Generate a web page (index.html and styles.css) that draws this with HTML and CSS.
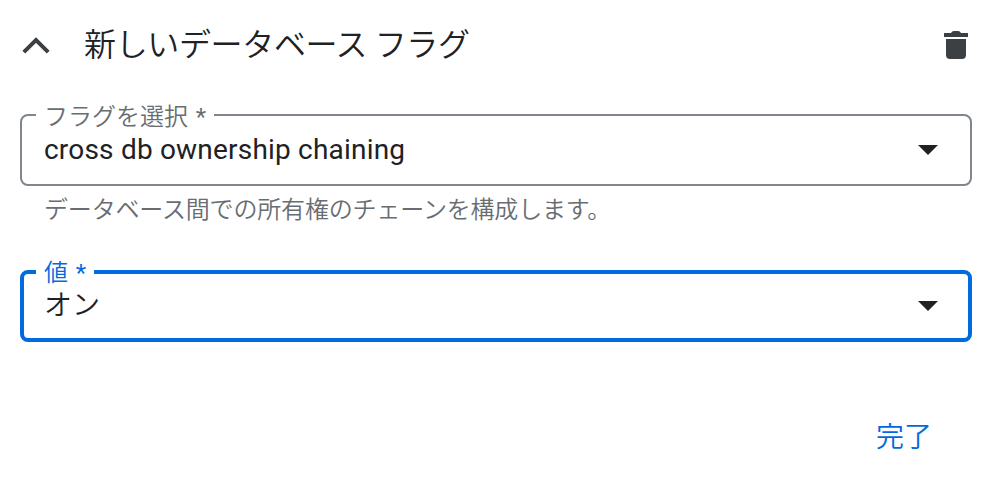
FILE: index.html
```
<!DOCTYPE html>
<html lang="ja">
<head>
    <meta charset="UTF-8">
    <meta name="viewport" content="width=device-width, initial-scale=1.0">
    <title>新しいデータベース フラグ</title>
    <link rel="stylesheet" href="styles.css">
</head>
<body>
<div class="panel">
    <div class="header">
        <svg class="chevron" viewBox="0 0 32 32"><path d="M3.8 23.2 16 11l12.2 12.2" fill="none" stroke="currentColor" stroke-width="4"/></svg>
        <h2 class="title">新しいデータベース フラグ</h2>
        <svg class="trash" viewBox="0 0 24 28"><path d="M0 2h7q1-2 3-2h4q2 0 3 2h7v4H0zM2 8h20v16q0 4-4 4H6q-4 0-4-4z" fill="currentColor"/></svg>
    </div>

    <fieldset class="field">
        <legend class="label">フラグを選択 <span class="required">*</span></legend>
        <div class="select">
            <span class="value">cross db ownership chaining</span>
            <svg class="arrow" viewBox="0 0 20 10"><path d="M0 0h20L10 10z" fill="currentColor"/></svg>
        </div>
    </fieldset>
    <p class="hint">データベース間での所有権のチェーンを構成します。</p>

    <fieldset class="field focused">
        <legend class="label">値 <span class="required">*</span></legend>
        <div class="select">
            <span class="value">オン</span>
            <svg class="arrow" viewBox="0 0 20 10"><path d="M0 0h20L10 10z" fill="currentColor"/></svg>
        </div>
    </fieldset>

    <div class="actions">
        <button type="button" class="button">完了</button>
    </div>
</div>
</body>
</html>
```

FILE: styles.css
```
* {
    box-sizing: border-box;
}
body {
    margin: 0;
    background: #fff;
    color: #202124;
    font-family: Roboto, "Noto Sans CJK JP", sans-serif;
    font-weight: 350;
}
.panel {
    padding: 0 12px 0 20px;
}
.header {
    display: flex;
    align-items: center;
    height: 90px;
}
.chevron {
    width: 32px;
    height: 32px;
    color: #3c4043;
}
.title {
    flex: 1;
    margin: 0 0 0 32px;
    font-size: 32px;
    font-weight: 350;
    line-height: 40px;
    letter-spacing: -0.35px;
}
.trash {
    width: 24px;
    height: 28px;
    margin-right: 4px;
    color: #3c4043;
}
.field {
    height: 84px;
    margin: 12px 0 0;
    padding: 0 32px 0 14px;
    min-width: 0;
    border: 2px solid #80868b;
    border-radius: 8px;
}
.label {
    height: 26px;
    padding: 2px 8px 0;
    color: #696d72;
    font-size: 24px;
    line-height: 26px;
    word-spacing: 2px;
}
.required {
    font-weight: 400;
}
.select {
    display: flex;
    align-items: center;
    justify-content: space-between;
    height: 40px;
    margin-top: 2px;
    padding-left: 8px;
}
.value {
    font-size: 28px;
    line-height: 40px;
    font-weight: 400;
    letter-spacing: 0.2px;
}
.arrow {
    width: 20px;
    height: 10px;
}
.hint {
    margin: 8px 0 0 24px;
    color: #696d72;
    font-size: 24px;
    line-height: 32px;
    letter-spacing: -0.17px;
}
.focused {
    height: 83px;
    margin-top: 33px;
    padding: 0 30px 0 12px;
    border: 4px solid #006ade;
}
.focused .label {
    padding-top: 1px;
    color: #006ade;
}
.focused .select {
    margin-top: 1px;
}
.focused .value {
    font-weight: 350;
    letter-spacing: 0;
}
.actions {
    display: flex;
    justify-content: flex-end;
    padding: 76px 40px 0 0;
}
.button {
    padding: 0;
    border: none;
    background: none;
    color: #006ade;
    font-family: inherit;
    font-size: 28px;
    font-weight: 350;
    line-height: 40px;
    cursor: pointer;
}
```
